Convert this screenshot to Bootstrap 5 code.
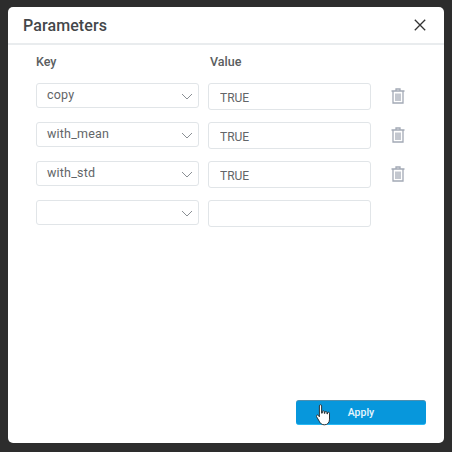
<!DOCTYPE html>
<html lang="en">
<head>
<meta charset="utf-8">
<title>Parameters</title>
<link href="https://cdn.jsdelivr.net/npm/bootstrap@5.3.0/dist/css/bootstrap.min.css" rel="stylesheet">
<style>
html,body{height:452px;overflow:hidden}
body{background:#2d2d2d;font-family:Roboto,"Liberation Sans",sans-serif;padding:7px 8px 9px}
.dlg{width:436px;height:436px;border:0;border-radius:5px;box-shadow:none;display:flex;flex-direction:column;background:#fff}
.dlg-head{height:38px;padding:2px 15px 0;border-bottom:2px solid #e9ecee;display:flex;align-items:center;justify-content:space-between}
.dlg-title{font-size:16px;font-weight:500;color:#44474a;letter-spacing:.1px;margin:0;line-height:20px}
.x-btn{background:none;border:0;padding:0;line-height:0;color:#333;margin:-2px 3px 0 0}
.dlg-body{padding:7px 28px 0;flex:1 1 auto;display:flex;flex-direction:column}
.lbl-row{display:flex;gap:9px;height:31px;font-size:12.5px;font-weight:500;color:#5a5d60;line-height:17px;padding-top:1px}
.lbl-row span{width:163px}
.lbl-row span+span{margin-left:2px}
.p-row{display:flex;gap:9px;height:39px;align-items:flex-start;flex:none}
.p-sel{width:163px;height:25px;border:1px solid #e1e5e8;border-radius:3px;font-size:12.5px;color:#626568;padding:0 10px;display:flex;align-items:center;justify-content:space-between;letter-spacing:.2px}
.p-sel svg{flex:none;margin-right:-5px;margin-top:1px}
.p-inp{width:163px;height:27px;border:1px solid #e1e5e8;border-radius:3px;font-size:12px;color:#626568;padding:2px 11px 0;line-height:24px;box-shadow:none;background:#fff}
.p-inp:focus{border-color:#e1e5e8;box-shadow:none}
.del{background:none;border:0;padding:0;margin-left:11px;margin-top:5px;line-height:0}
.dlg-foot{padding:0 18px 18px 0;display:flex;justify-content:flex-end}
.apply{width:130px;height:25px;padding:0;font-size:10.5px;font-weight:500;color:#e8f6fd;background:#0797dc;border:0;border-top:1px solid #4e8fb0;border-bottom:1px solid #27b9f5;border-radius:3px;line-height:21px;position:relative}
.hand{position:absolute;left:20px;top:3px;line-height:0}
</style>
</head>
<body>
<div class="modal-content dlg">
  <div class="dlg-head">
    <h5 class="dlg-title">Parameters</h5>
    <button class="x-btn" type="button" aria-label="Close"><svg width="12" height="12" viewBox="0 0 12 12" fill="none" stroke="#333" stroke-width="1.3"><path d="M.8.8l10.4 10.4M11.2.8L.8 11.2"/></svg></button>
  </div>
  <div class="dlg-body">
    <div class="lbl-row"><span>Key</span><span>Value</span></div>
    <div class="p-row">
      <div class="p-sel"><span>copy</span><svg width="12" height="7" viewBox="0 0 12 7" fill="none" stroke="#8a8f94" stroke-width="1"><path d="M1 1l5 5 5-5"/></svg></div>
      <input class="form-control p-inp" value="TRUE">
      <button class="del" type="button" aria-label="Delete"><svg width="14" height="16" viewBox="0 0 14 16" fill="none" stroke="#a3a9b5" stroke-width="1.3"><path d="M.5 3h13M5 3V1h4v2M2 3.500V15h10V3.500M5 5.500V13M7 5.500V13M9 5.500V13"/></svg></button>
    </div>
    <div class="p-row">
      <div class="p-sel"><span>with_mean</span><svg width="12" height="7" viewBox="0 0 12 7" fill="none" stroke="#8a8f94" stroke-width="1"><path d="M1 1l5 5 5-5"/></svg></div>
      <input class="form-control p-inp" value="TRUE">
      <button class="del" type="button" aria-label="Delete"><svg width="14" height="16" viewBox="0 0 14 16" fill="none" stroke="#a3a9b5" stroke-width="1.3"><path d="M.5 3h13M5 3V1h4v2M2 3.500V15h10V3.500M5 5.500V13M7 5.500V13M9 5.500V13"/></svg></button>
    </div>
    <div class="p-row">
      <div class="p-sel"><span>with_std</span><svg width="12" height="7" viewBox="0 0 12 7" fill="none" stroke="#8a8f94" stroke-width="1"><path d="M1 1l5 5 5-5"/></svg></div>
      <input class="form-control p-inp" value="TRUE">
      <button class="del" type="button" aria-label="Delete"><svg width="14" height="16" viewBox="0 0 14 16" fill="none" stroke="#a3a9b5" stroke-width="1.3"><path d="M.5 3h13M5 3V1h4v2M2 3.500V15h10V3.500M5 5.500V13M7 5.500V13M9 5.500V13"/></svg></button>
    </div>
    <div class="p-row">
      <div class="p-sel"><span></span><svg width="12" height="7" viewBox="0 0 12 7" fill="none" stroke="#8a8f94" stroke-width="1"><path d="M1 1l5 5 5-5"/></svg></div>
      <input class="form-control p-inp" value="">
    </div>
  </div>
  <div class="dlg-foot">
    <button class="btn apply" type="button">Apply
      <span class="hand"><svg width="16" height="22" viewBox="0 0 16 22"><path d="M3.400 1.800c0-1.400 2.200-1.400 2.200 0v7.400l.7-.1V7.700c0-1.200 2-1.200 2 0v1.600l.6.1V8.400c0-1.200 2-1.200 2 0v1.400l.6.1V9c0-1.100 2-1.100 2 .2v6c0 3-1.600 5.600-5 5.600-2.800 0-4-1.200-5.200-3.500L.5 12.600c-.6-1.200 1-2.200 1.800-1.200l1.100 1.400z" fill="#fff" stroke="#222" stroke-width=".9" stroke-linejoin="round"/></svg></span>
    </button>
  </div>
</div>
<script src="https://cdn.jsdelivr.net/npm/bootstrap@5.3.0/dist/js/bootstrap.bundle.min.js"></script>
</body>
</html>
